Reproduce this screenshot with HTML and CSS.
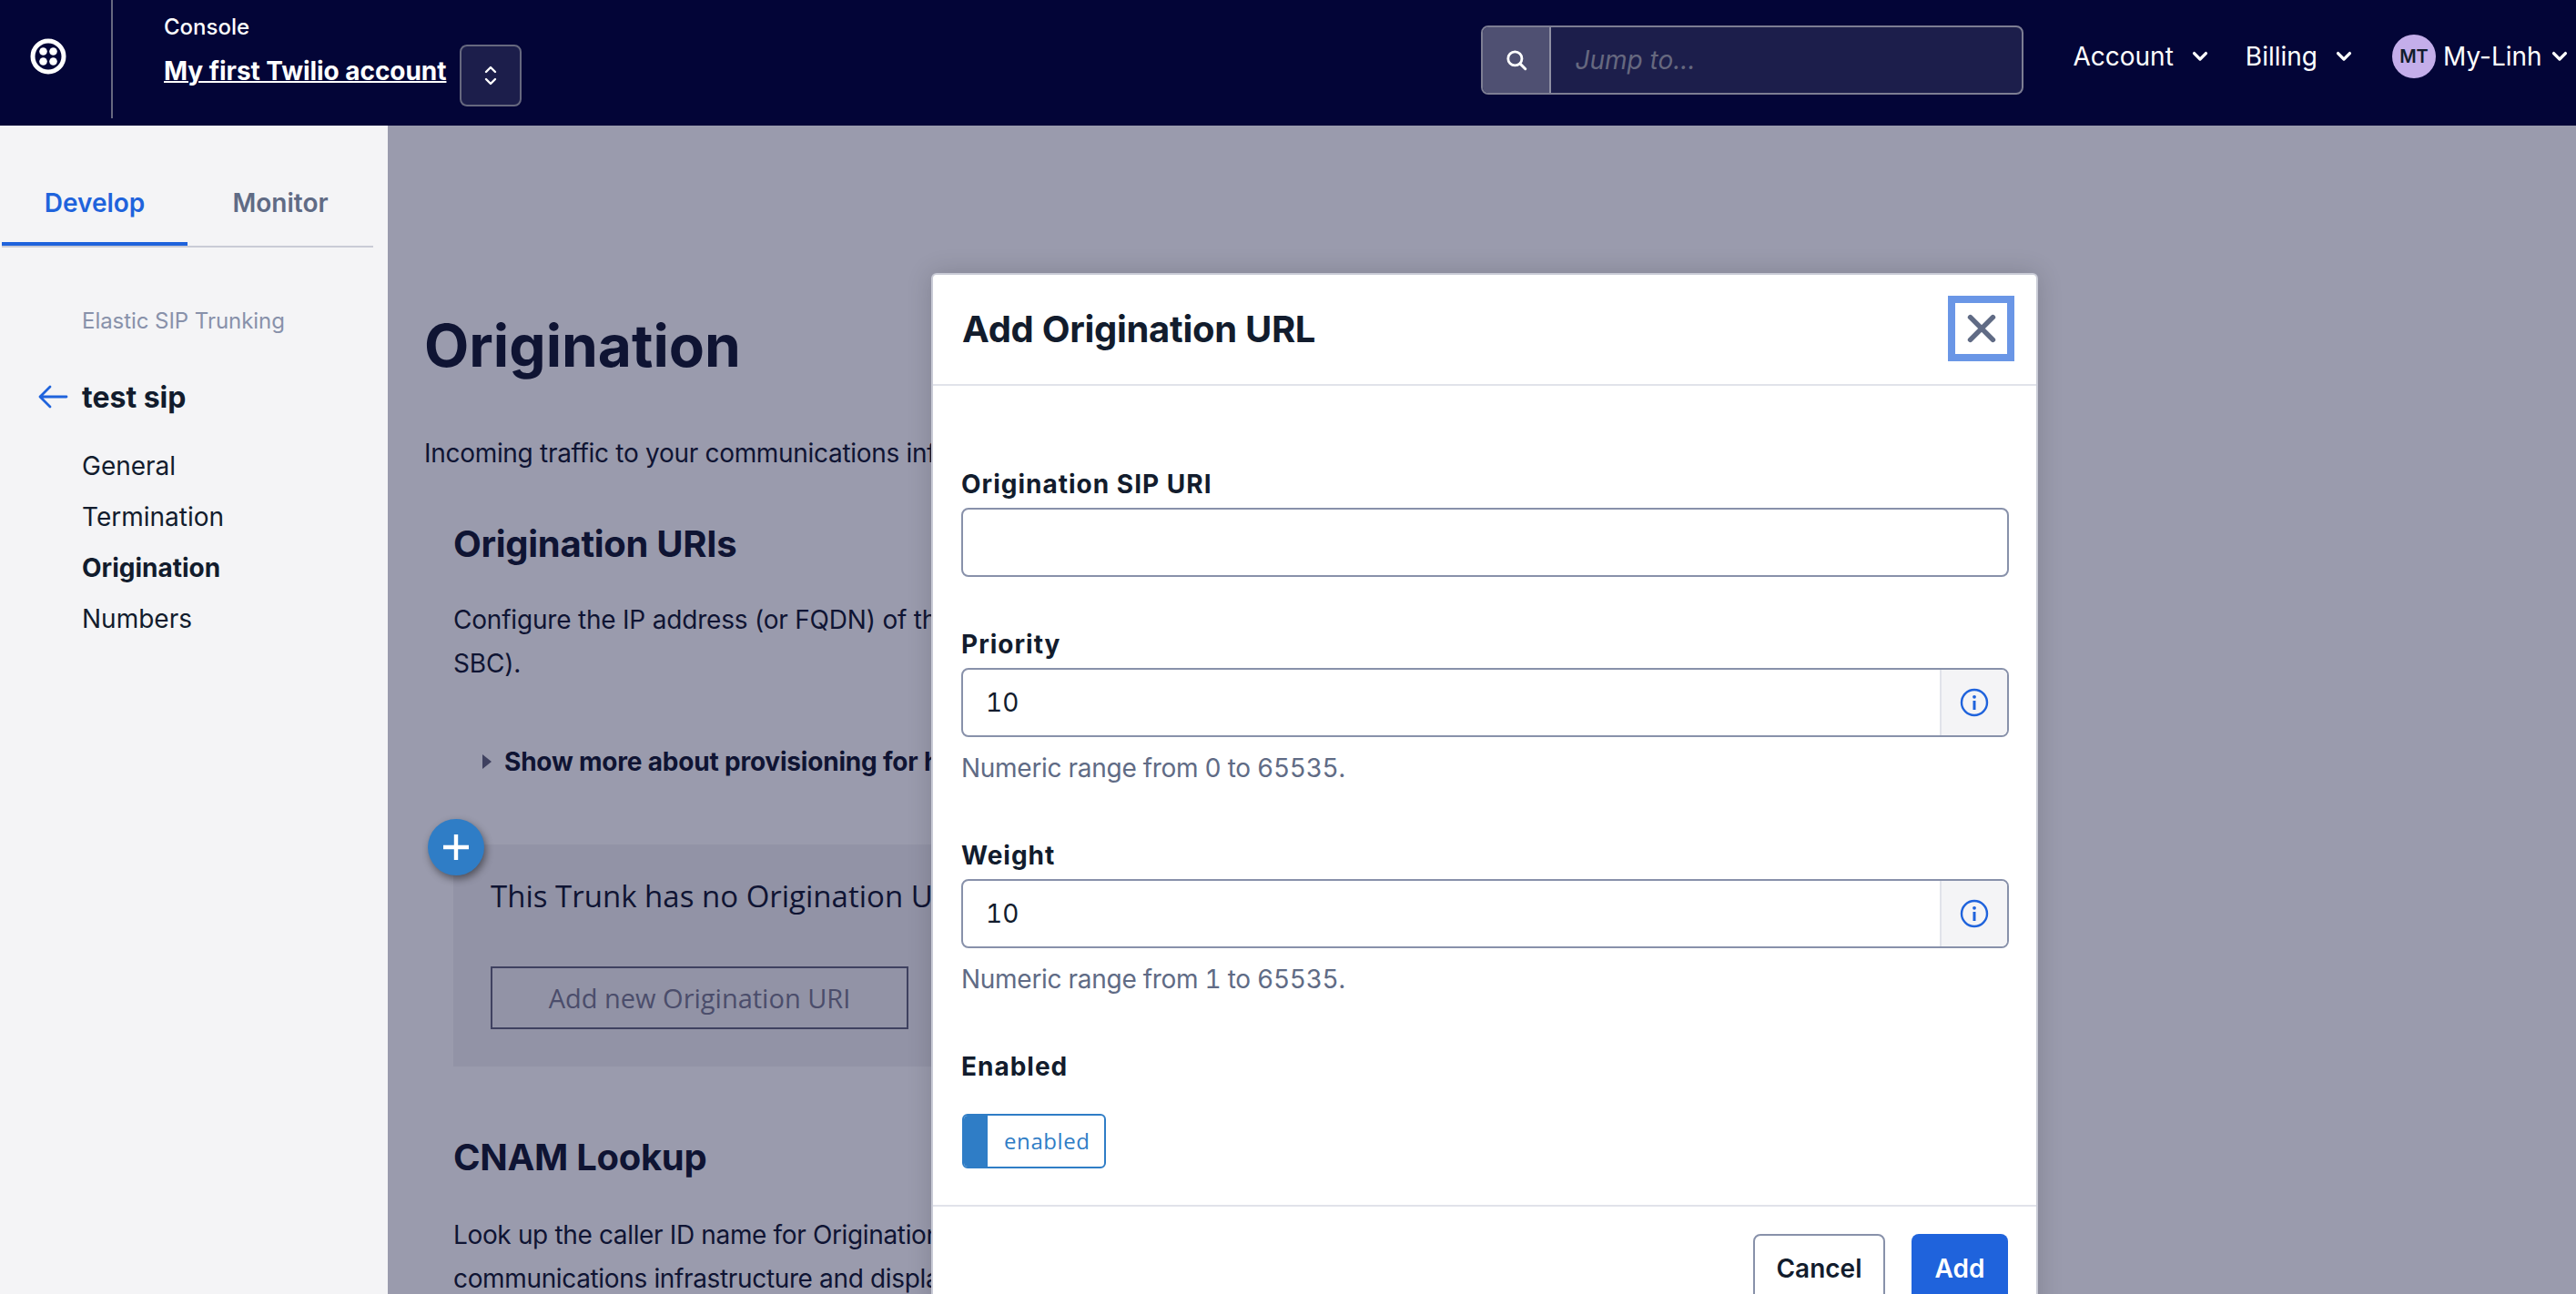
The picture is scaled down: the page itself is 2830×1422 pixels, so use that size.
FILE: index.html
```html
<!DOCTYPE html>
<html lang="en">

<head>
  <meta charset="UTF-8">
  <title>Origination</title>
  <link rel="stylesheet" href="styles.css">
</head>

<body>
  <header class="topbar">
    <div class="logo-cell">
      <svg class="logo" viewBox="0 0 40 40">
        <circle cx="20" cy="20" r="17" fill="none" stroke="#fff" stroke-width="5" />
        <circle cx="14.5" cy="14.5" r="4.3" fill="#fff" />
        <circle cx="25.5" cy="14.5" r="4.3" fill="#fff" />
        <circle cx="14.5" cy="25.5" r="4.3" fill="#fff" />
        <circle cx="25.5" cy="25.5" r="4.3" fill="#fff" />
      </svg>
    </div>
    <div class="account-cell">
      <div class="console">Console</div>
      <a class="account-name">My first Twilio account</a>
    </div>
    <button class="switcher">
      <svg viewBox="0 0 16 26" width="16" height="26">
        <path d="M3 9l5-5 5 5M3 17l5 5 5-5" fill="none" stroke="#fff" stroke-width="2.4" stroke-linecap="round" stroke-linejoin="round" />
      </svg>
    </button>
    <div class="search">
      <div class="search-icon">
        <svg viewBox="0 0 24 24" width="26" height="26">
          <circle cx="10.5" cy="10.5" r="7" fill="none" stroke="#fff" stroke-width="2.6" />
          <path d="M15.8 15.8L21 21" stroke="#fff" stroke-width="2.8" stroke-linecap="round" />
        </svg>
      </div>
      <div class="search-text">Jump to...</div>
    </div>
    <nav class="topnav">
      <a class="topnav-account">Account
        <svg class="caret" viewBox="0 0 14 10"><path d="M2 2l5 5 5-5" /></svg>
      </a>
      <a class="topnav-billing">Billing
        <svg class="caret" viewBox="0 0 14 10"><path d="M2 2l5 5 5-5" /></svg>
      </a>
      <span class="avatar">MT</span>
      <a class="topnav-user">My-Linh
        <svg class="caret" viewBox="0 0 14 10"><path d="M2 2l5 5 5-5" /></svg>
      </a>
    </nav>
  </header>

  <div class="layout">
    <aside class="sidebar">
      <div class="tabs">
        <div class="tab tab-active">Develop</div>
        <div class="tab">Monitor</div>
      </div>
      <div class="product">Elastic SIP Trunking</div>
      <div class="back-row">
        <svg class="back-arrow" viewBox="0 0 34 28">
          <path d="M32 14H3M14 3L3 14l11 11" fill="none" stroke="#1f63dc" stroke-width="2.8" stroke-linecap="round" stroke-linejoin="round" />
        </svg>
        <span>test sip</span>
      </div>
      <ul class="side-menu">
        <li>General</li>
        <li>Termination</li>
        <li class="current">Origination</li>
        <li>Numbers</li>
      </ul>
    </aside>

    <main class="content">
      <h1>Origination</h1>
      <p class="intro">Incoming traffic to your communications inf</p>
      <section class="uris">
        <h2>Origination URIs</h2>
        <p>Configure the IP address (or FQDN) of th<br>SBC).</p>
        <div class="show-more"><span class="triangle"></span>Show more about provisioning for h</div>
        <div class="empty-panel">
          <div class="add-circle">
            <svg viewBox="0 0 32 32" width="32" height="32">
              <path d="M16 2v28M2 16h28" stroke="#fff" stroke-width="4.4" />
            </svg>
          </div>
          <div class="empty-title">This Trunk has no Origination U</div>
          <div class="empty-btn">Add new Origination URI</div>
        </div>
        <h2 class="cnam">CNAM Lookup</h2>
        <p class="cnam-text">Look up the caller ID name for Origination<br>communications infrastructure and displa</p>
      </section>
    </main>
  </div>

  <div class="modal">
    <div class="modal-head">
      <h3>Add Origination URL</h3>
      <button class="close">
        <svg viewBox="0 0 32 32" width="36" height="36">
          <path d="M5 5l22 22M27 5L5 27" stroke="#606b85" stroke-width="5" stroke-linecap="round" />
        </svg>
      </button>
    </div>
    <div class="modal-body">
      <label>Origination SIP URI</label>
      <div class="field field-last"></div>

      <label>Priority</label>
      <div class="field">
        <div class="field-value">10</div>
        <div class="addon">
          <svg viewBox="0 0 32 32" width="32" height="32">
            <circle cx="16" cy="16" r="14" fill="none" stroke="#1f63dc" stroke-width="2.4" />
            <circle cx="16" cy="9.8" r="1.9" fill="#1f63dc" />
            <path d="M16 14v10" stroke="#1f63dc" stroke-width="3" />
          </svg>
        </div>
      </div>
      <div class="help">Numeric range from 0 to 65535.</div>

      <label>Weight</label>
      <div class="field">
        <div class="field-value">10</div>
        <div class="addon">
          <svg viewBox="0 0 32 32" width="32" height="32">
            <circle cx="16" cy="16" r="14" fill="none" stroke="#1f63dc" stroke-width="2.4" />
            <circle cx="16" cy="9.8" r="1.9" fill="#1f63dc" />
            <path d="M16 14v10" stroke="#1f63dc" stroke-width="3" />
          </svg>
        </div>
      </div>
      <div class="help">Numeric range from 1 to 65535.</div>

      <label class="label-toggle">Enabled</label>
      <div class="toggle">
        <span class="toggle-knob"></span>
        <span class="toggle-text">enabled</span>
      </div>
    </div>
    <div class="modal-foot">
      <button class="btn btn-cancel">Cancel</button>
      <button class="btn btn-add">Add</button>
    </div>
  </div>
</body>

</html>
```

FILE: styles.css
```css
html,
body {
  height: 100%;
}

body {
  margin: 0;
  overflow: hidden;
  font-family: Inter, "Liberation Sans", sans-serif;
  color: #121c2d;
  background: #9a9bad;
}

/* top bar */
.topbar {
  display: flex;
  height: 138px;
  background: #030537;
  color: #fff;
}

.logo-cell {
  display: flex;
  align-items: center;
  justify-content: center;
  width: 124px;
  height: 130px;
  padding-bottom: 6px;
  box-sizing: border-box;
  border-right: 2px solid #66687f;
}

.logo {
  width: 40px;
  height: 40px;
  margin-left: -16px;
}

.account-cell {
  margin-left: 56px;
  padding-top: 15px;
}

.console {
  font-size: 24px;
  font-weight: 500;
  line-height: 30px;
}

.account-name {
  display: block;
  margin-top: 18px;
  font-size: 28px;
  font-weight: 700;
  line-height: 30px;
  letter-spacing: -0.05px;
  text-decoration: underline;
  text-decoration-thickness: 2px;
}

.switcher {
  display: flex;
  align-items: center;
  justify-content: center;
  width: 68px;
  height: 68px;
  margin: 49px 0 0 15px;
  padding: 0;
  background: #1c1e4b;
  border: 2px solid #66687f;
  border-radius: 8px;
}

.search {
  display: flex;
  width: 596px;
  height: 76px;
  margin: 28px 0 0 1054px;
  box-sizing: border-box;
  background: #1c1e4b;
  border: 2px solid #7d7e93;
  border-radius: 8px;
  overflow: hidden;
}

.search-icon {
  display: flex;
  align-items: center;
  justify-content: center;
  width: 73px;
  background: #4f5072;
  border-right: 2px solid #8e8fa3;
}

.search-text {
  margin-left: 26px;
  font-size: 28px;
  font-style: italic;
  line-height: 72px;
  color: #66687f;
}

.topnav {
  display: flex;
  align-items: center;
  height: 124px;
  margin-left: 54px;
  font-size: 28px;
  white-space: nowrap;
}

.topnav a {
  display: flex;
  align-items: center;
}

.caret {
  width: 18px;
  height: 13px;
  fill: none;
  stroke: #fff;
  stroke-width: 2.6;
  stroke-linecap: round;
  stroke-linejoin: round;
}

.topnav-account .caret {
  margin-left: 20px;
}

.topnav-billing {
  margin-left: 41px;
}

.topnav-billing .caret {
  margin-left: 20px;
}

.avatar {
  display: flex;
  align-items: center;
  justify-content: center;
  width: 48px;
  height: 48px;
  margin-left: 44px;
  background: #c4aeea;
  border-radius: 50%;
  color: #121c2d;
  font-size: 20px;
  font-weight: 600;
}

.topnav-user {
  margin-left: 8px;
}

.topnav-user .caret {
  margin-left: 10px;
}

/* page */
.layout {
  display: flex;
  height: calc(100vh - 138px);
}

.sidebar {
  flex: none;
  width: 426px;
  background: #f4f4f6;
}

.tabs {
  display: flex;
  width: 408px;
  height: 134px;
  margin-left: 2px;
  box-sizing: border-box;
  border-bottom: 2px solid #c9cbd6;
}

.tab {
  width: 204px;
  height: 132px;
  box-sizing: border-box;
  padding-top: 68px;
  font-size: 28px;
  font-weight: 600;
  line-height: 34px;
  text-align: center;
  color: #606b85;
}

.tab-active {
  color: #1f63dc;
  border-bottom: 4px solid #1f63dc;
}

.product {
  margin: 64px 0 0 90px;
  font-size: 24px;
  line-height: 34px;
  letter-spacing: -0.05px;
  color: #8891aa;
}

.back-row {
  display: flex;
  align-items: center;
  margin: 44px 0 0 41px;
  height: 44px;
  font-size: 32px;
  font-weight: 700;
}

.back-arrow {
  width: 34px;
  height: 28px;
  margin-right: 15px;
}

.side-menu {
  list-style: none;
  margin: 26px 0 0;
  padding: 0 0 0 90px;
  font-size: 28px;
  line-height: 56px;
}

.current {
  font-weight: 700;
}

.content {
  flex: 1;
  padding-left: 40px;
  color: #0f1433;
}

h1 {
  margin: 204px 0 0;
  font-size: 64px;
  font-weight: 700;
  line-height: 76px;
}

.intro {
  margin: 60px 0 0;
  font-size: 28px;
  line-height: 40px;
  letter-spacing: -0.3px;
}

.uris {
  padding-left: 32px;
}

h2 {
  margin: 57px 0 0;
  font-size: 40px;
  font-weight: 700;
  line-height: 46px;
  letter-spacing: -0.3px;
}

.uris p {
  margin: 36px 0 0;
  font-size: 28px;
  line-height: 48px;
  letter-spacing: -0.2px;
}

.show-more {
  display: flex;
  align-items: center;
  margin: 64px 0 0 32px;
  font-size: 28px;
  font-weight: 700;
  line-height: 40px;
  letter-spacing: -0.2px;
}

.triangle {
  width: 0;
  height: 0;
  margin-right: 14px;
  border-left: 10px solid #3f4160;
  border-top: 8px solid transparent;
  border-bottom: 8px solid transparent;
}

.empty-panel {
  position: relative;
  width: 1000px;
  height: 244px;
  margin-top: 71px;
  padding: 36px 0 0 41px;
  box-sizing: border-box;
  background: #9293a6;
}

.add-circle {
  position: absolute;
  top: -28px;
  left: -28px;
  display: flex;
  align-items: center;
  justify-content: center;
  width: 62px;
  height: 62px;
  background: #2f7dc6;
  border-radius: 50%;
  box-shadow: 2px 4px 8px rgba(0, 0, 0, 0.45);
}

.empty-title {
  font-family: "Open Sans", "Liberation Sans", sans-serif;
  font-size: 33px;
  line-height: 42px;
}

.empty-btn {
  width: 459px;
  height: 69px;
  margin-top: 56px;
  box-sizing: border-box;
  border: 2px solid #3f4160;
  font-family: "Open Sans", "Liberation Sans", sans-serif;
  font-size: 29px;
  line-height: 65px;
  text-align: center;
  color: #4b4d6b;
}

.cnam {
  margin-top: 77px;
}

.uris .cnam-text {
  margin-top: 38px;
  line-height: 48px;
  letter-spacing: -0.35px;
}

/* modal */
.modal {
  position: absolute;
  top: 300px;
  left: 1023px;
  width: 1216px;
  height: 1200px;
  box-sizing: border-box;
  background: #fff;
  border: 2px solid #c9cbd6;
  border-radius: 6px;
  box-shadow: 0 0 28px rgba(0, 0, 0, 0.16);
}

.modal-head {
  display: flex;
  align-items: center;
  justify-content: space-between;
  height: 122px;
  padding: 0 24px 2px 32px;
  box-sizing: border-box;
  border-bottom: 2px solid #e1e3ea;
}

h3 {
  margin: 0;
  font-size: 40px;
  font-weight: 700;
  letter-spacing: -0.3px;
}

.close {
  display: flex;
  align-items: center;
  justify-content: center;
  width: 73px;
  height: 72px;
  padding: 0;
  background: #fff;
  border: 8px solid #6a96e6;
}

.modal-body {
  height: 902px;
  padding: 90px 30px 0 31px;
  box-sizing: border-box;
  border-bottom: 2px solid #e1e3ea;
}

label {
  display: block;
  margin-bottom: 8px;
  font-size: 28px;
  font-weight: 700;
  line-height: 36px;
  letter-spacing: 1px;
}

.field {
  display: flex;
  height: 76px;
  box-sizing: border-box;
  border: 2px solid #8891aa;
  border-radius: 8px;
  overflow: hidden;
}

.field-last {
  margin-bottom: 56px;
}

.field-value {
  flex: 1;
  padding-left: 25px;
  font-size: 28px;
  line-height: 72px;
  font-variant-numeric: tabular-nums;
}

.addon {
  display: flex;
  align-items: center;
  justify-content: center;
  width: 72px;
  background: #f4f4f6;
  border-left: 2px solid #e1e3ea;
}

.help {
  margin: 16px 0 60px;
  font-size: 28px;
  line-height: 36px;
  letter-spacing: -0.28px;
  font-variant-numeric: tabular-nums;
  color: #606b85;
}

.label-toggle {
  margin-bottom: 34px;
}

.toggle {
  display: flex;
  width: 158px;
  height: 60px;
  margin-left: 1px;
  box-sizing: border-box;
  border: 2px solid #2f7dc6;
  border-radius: 6px;
  overflow: hidden;
}

.toggle-knob {
  width: 26px;
  background: #2f7dc6;
}

.toggle-text {
  margin-left: 18px;
  font-family: "Open Sans", "Liberation Sans", sans-serif;
  font-size: 24px;
  line-height: 56px;
  letter-spacing: 0.6px;
  color: #2f7dc6;
}

.modal-foot {
  display: flex;
  justify-content: flex-end;
  gap: 29px;
  padding: 30px 31px 0 0;
}

.btn {
  height: 76px;
  font-family: inherit;
  font-size: 28px;
  font-weight: 600;
  border-radius: 8px;
}

.btn-cancel {
  width: 145px;
  background: #fff;
  border: 2px solid #8891aa;
  color: #121c2d;
}

.btn-add {
  width: 106px;
  background: #1f63dc;
  border: none;
  color: #fff;
}
```
